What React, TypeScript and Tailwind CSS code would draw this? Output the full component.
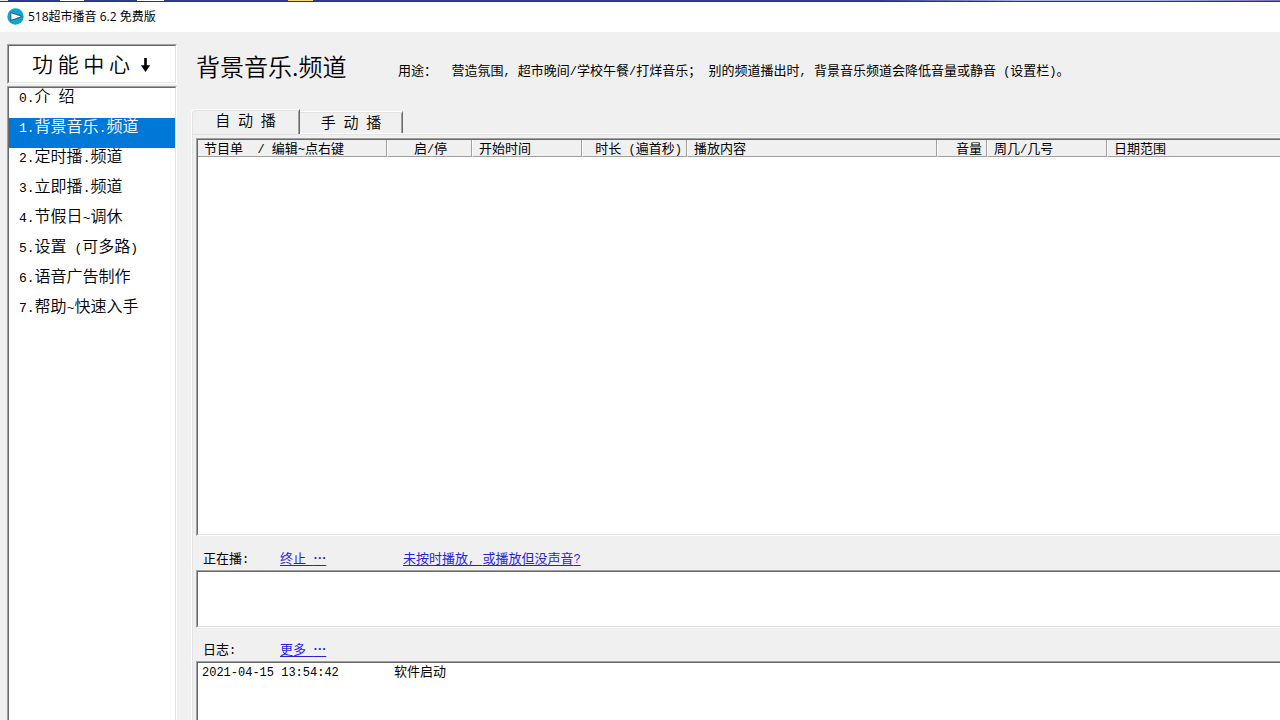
import { Fragment, type ReactNode } from "react";

const MENU = [
  "0.介 绍",
  "1.背景音乐.频道",
  "2.定时播.频道",
  "3.立即播.频道",
  "4.节假日~调休",
  "5.设置 (可多路)",
  "6.语音广告制作",
  "7.帮助~快速入手",
];

const COLUMNS = [
  { label: "节目单  / 编辑~点右键", width: "w-[189px]", align: "text-left" },
  { label: "启/停", width: "w-[85px]", align: "text-center" },
  { label: "开始时间", width: "w-[110px]", align: "text-left" },
  { label: "时长 (遍首秒)", width: "w-[105px]", align: "text-right" },
  { label: "播放内容", width: "w-[250px]", align: "text-left" },
  { label: "音量", width: "w-[50px]", align: "text-right" },
  { label: "周几/几号", width: "w-[120px]", align: "text-left" },
  { label: "日期范围", width: "", align: "text-left" },
];

const FONT = "font-['Noto_Sans_CJK_SC',sans-serif]";

// Latin runs are set in a smaller monospace so they take half a CJK cell
function Mixed({ text, latin = "text-[12px]" }: { text: string; latin?: string }) {
  const runs = text.match(/[\x20-\x7e]+|[^\x20-\x7e]+/g) ?? [];
  return (
    <>
      {runs.map((run, i) =>
        /^[\x20-\x7e]/.test(run) ? (
          <span
            key={i}
            className={`leading-none whitespace-pre font-['Liberation_Mono',monospace] ${latin}`}
          >
            {run}
          </span>
        ) : (
          <Fragment key={i}>{run}</Fragment>
        )
      )}
    </>
  );
}

function Sunken({
  className = "",
  inner = "",
  children,
}: {
  className?: string;
  inner?: string;
  children?: ReactNode;
}) {
  return (
    <div
      className={`flex flex-col border border-t-[#a0a0a0] border-r-white border-b-white border-l-[#a0a0a0] ${className}`}
    >
      <div
        className={`min-h-0 flex-1 border border-t-[#696969] border-r-[#e3e3e3] border-b-[#e3e3e3] border-l-[#696969] bg-white ${inner}`}
      >
        {children}
      </div>
    </div>
  );
}

function Backdrop() {
  return (
    <div className="flex h-[2px] shrink-0 border-b border-[#30345a] bg-[#2c4188]">
      <div className="w-[8px] bg-[#e8e8ee]" />
      <div className="w-[52px]" />
      <div className="w-[24px] bg-white" />
      <div className="w-[53px]" />
      <div className="w-[27px] bg-white" />
      <div className="w-[124px]" />
      <div className="w-[25px] bg-[#f5d77a]" />
      <div className="w-[567px]" />
      <div className="w-[140px] bg-linear-to-r from-[#2c4188] to-[#a9b3e0]" />
      <div className="flex-1 bg-linear-to-r from-[#a9b3e0] via-[#a9b3e0] to-[#7276b0]" />
    </div>
  );
}

function TitleBar() {
  return (
    <header className="flex h-[30px] shrink-0 items-center gap-1 bg-white pb-px pl-[7px]">
      <svg width="17" height="17" viewBox="0 0 17 17" aria-hidden="true">
        <circle cx="8.5" cy="8.5" r="8.2" fill="#0da6d1" />
        <path
          d="M3.8 4.6v7.8L14 8.900v-.8z"
          fill="#fff"
          stroke="#2a5d7c"
          strokeWidth="1.1"
          strokeLinejoin="round"
        />
      </svg>
      <h1 className="font-['Open_Sans','Noto_Sans_CJK_SC',sans-serif] text-[12px] leading-4">
        518超市播音 6.2 免费版
      </h1>
    </header>
  );
}

function Sidebar() {
  return (
    <aside className="flex w-[170px] shrink-0 flex-col gap-[2px]">
      <Sunken className="h-10 shrink-0" inner="flex items-center gap-[10px] pb-[2px] pl-[23px]">
        <h2 className="text-[21px] leading-8 font-[350] whitespace-nowrap">功 能 中 心</h2>
        <svg width="11" height="14" viewBox="0 0 11 14" className="mt-[3px]" aria-hidden="true">
          <path d="M4.2 0h2.6v7.200h3.400L5.500 14 .8 7.200h3.400z" fill="#000" />
        </svg>
      </Sunken>
      <Sunken className="flex-1 border-b-0" inner="border-b-0">
        <nav>
          {MENU.map((item, i) => (
            <button
              key={item}
              className={`flex h-[30px] w-full items-start pl-[10px] text-left text-[16px] leading-[14px] font-[350] whitespace-pre ${
                i === 1 ? "bg-[#0078d7] text-white" : "text-black"
              }`}
            >
              <span>
                <Mixed text={item} latin="text-[13px]" />
              </span>
            </button>
          ))}
        </nav>
      </Sunken>
    </aside>
  );
}

function Tabs() {
  return (
    <div role="tablist" className="flex items-end text-[15px] leading-5 font-[350]">
      <button
        role="tab"
        aria-selected="true"
        className="relative z-10 -mb-px h-[25px] w-[109px] rounded-tl-sm border-t border-r border-l border-t-white border-r-[#696969] border-l-white bg-[#f0f0f0] pb-[6px] shadow-[inset_1px_1px_#e3e3e3,inset_-1px_0_#a0a0a0]"
      >
        <Mixed text="自 动 播" latin="text-[13px]" />
      </button>
      <button
        role="tab"
        aria-selected="false"
        className="h-[22px] w-[103px] border-t border-r border-t-white border-r-[#696969] pb-[2px] shadow-[inset_0_1px_#e3e3e3,inset_-1px_0_#a0a0a0]"
      >
        <Mixed text="手 动 播" latin="text-[13px]" />
      </button>
    </div>
  );
}

function ProgramTable() {
  return (
    <Sunken className="min-h-0 flex-1 border-r-0" inner="border-r-0">
      <table className="w-full min-w-[1110px] table-fixed border-separate border-spacing-0 text-[13px]">
        <thead>
          <tr>
            {COLUMNS.map((col) => (
              <th
                key={col.label}
                className={`h-4 border-r border-b border-l border-r-[#a0a0a0] border-b-[#a0a0a0] border-l-white bg-[#f0f0f0] py-0 pr-1 pl-[6px] align-top leading-[15px] font-normal whitespace-nowrap first:border-l-0 ${col.width} ${col.align}`}
              >
                <Mixed text={col.label} />
              </th>
            ))}
          </tr>
        </thead>
        <tbody />
      </table>
    </Sunken>
  );
}

const LINK = "whitespace-nowrap text-[#2a1fd8] underline underline-offset-2";

export default function App() {
  return (
    <div className={`flex h-screen flex-col overflow-hidden bg-[#f0f0f0] text-black ${FONT}`}>
      <Backdrop />
      <TitleBar />
      <div className="flex min-h-0 flex-1 pt-3 pl-[7px]">
        <Sidebar />
        <main className="flex min-w-0 flex-1 flex-col overflow-hidden pl-[14px]">
          <div className="flex h-[65px] shrink-0 items-start pl-[5px]">
            <h2 className="w-[202px] shrink-0 text-[24px] leading-[44px] font-[350] whitespace-nowrap">
              背景音乐.频道
            </h2>
            <p className="pt-[18px] text-[13px] leading-4 whitespace-nowrap">
              <Mixed text="用途：  营造氛围, 超市晚间/学校午餐/打烊音乐； 别的频道播出时, 背景音乐频道会降低音量或静音 (设置栏)。" />
            </p>
          </div>
          <Tabs />
          <section className="flex min-h-0 flex-1 flex-col border-t border-l border-white pt-1 pl-1 shadow-[inset_1px_1px_#e3e3e3]">
            <ProgramTable />
            <div className="flex h-[34px] shrink-0 items-end pb-[3px] pl-[7px] text-[13px] leading-[18px]">
              <span className="w-[77px]">
                <Mixed text="正在播:" />
              </span>
              <span className="w-[123px]">
                <a href="#stop" className={LINK}>
                  <Mixed text="终止 " />
                  <b>⋯</b>
                </a>
              </span>
              <a href="#trouble" className={LINK}>
                <Mixed text="未按时播放, 或播放但没声音?" />
              </a>
            </div>
            <Sunken className="h-[58px] shrink-0 border-r-0" inner="border-r-0" />
            <div className="flex h-[33px] shrink-0 items-end pb-[3px] pl-[7px] text-[13px] leading-[18px]">
              <span className="w-[77px]">
                <Mixed text="日志:" />
              </span>
              <a href="#more" className={LINK}>
                <Mixed text="更多 " />
                <b>⋯</b>
              </a>
            </div>
            <Sunken className="h-[59px] shrink-0 border-r-0 border-b-0" inner="border-r-0 border-b-0">
              <div className="flex pl-1 text-[13px] leading-4">
                <time className="w-[192px]">
                  <Mixed text="2021-04-15 13:54:42" />
                </time>
                <span>软件启动</span>
              </div>
            </Sunken>
          </section>
        </main>
      </div>
    </div>
  );
}
